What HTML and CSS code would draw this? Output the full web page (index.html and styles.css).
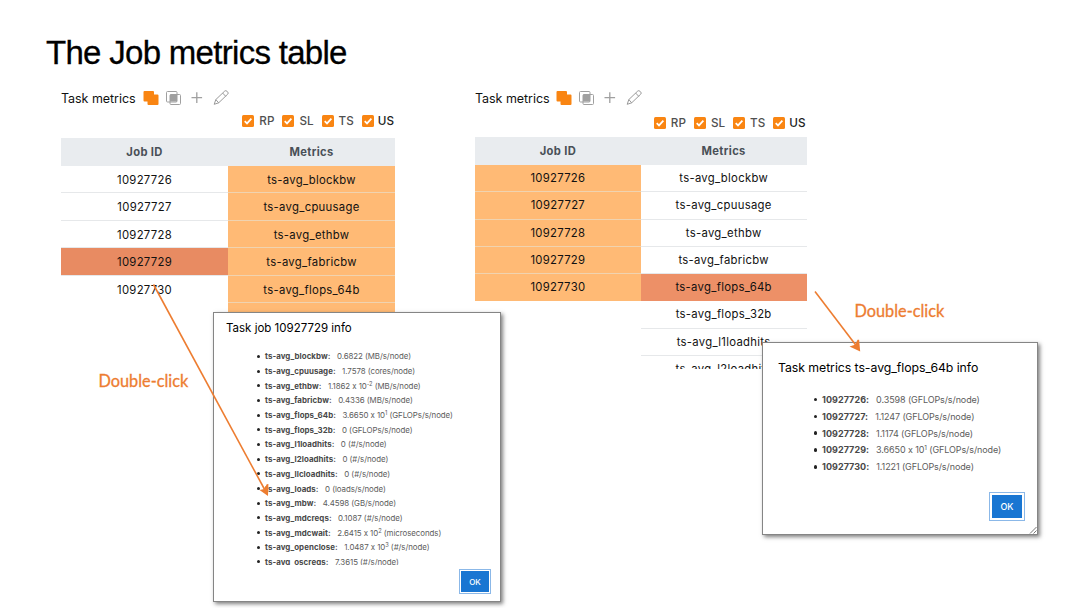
FILE: index.html
```html
<!DOCTYPE html>
<html lang="en">
<head>
<meta charset="utf-8">
<title>The Job metrics table</title>
<link rel="stylesheet" href="styles.css">
</head>
<body>
<svg class="defs" width="0" height="0">
  <symbol id="tools" viewBox="0 0 90 18">
    <path fill="#f98512" d="M1.500 2h8.500q1 0 1 1v2.500h3.500q1 0 1 1v8.500q0 1-1 1h-9q-1 0-1-1v-2.500h-3q-1 0-1-1V3q0-1 1-1z"/>
    <g fill="none" stroke="#a0a0a0"><rect x="23.500" y="2.500" width="10.500" height="10.500" rx="1"/><rect x="27" y="5.500" width="10.500" height="10" rx="1"/></g>
    <rect x="27" y="5.500" width="7" height="7" fill="#a0a0a0"/>
    <path d="M53.800 3.300v10.600M48.500 8.600h10.600" stroke="#a0a0a0" stroke-width="1.300"/>
    <path d="M71.200 15.300l1.600-4.700 8.900-8.500q1.100-1 2.200.1l.8.800q1.100 1.100 0 2.200l-9 8.600zM72.800 10.600l2.900 3.200M79.700 4.100l3 3.200" fill="none" stroke="#8e8e8e" stroke-width=".9"/>
  </symbol>
  <symbol id="check" viewBox="0 0 12 12"><rect width="12" height="12" rx="1.500" fill="#f98512"/><path d="M2.700 6.100l2.300 2.300 4.400-4.800" fill="none" stroke="#fff" stroke-width="1.700"/></symbol>
</svg>
<main class="slide">
  <h1 class="title"><span>The Job metrics table</span></h1>
  <div class="panels">
    <section class="panel left">
      <div class="toolbar"><span>Task metrics</span><svg class="tools"><use href="#tools"/></svg></div>
      <div class="filters">
        <label><svg><use href="#check"/></svg>RP</label><label><svg><use href="#check"/></svg>SL</label><label><svg><use href="#check"/></svg>TS</label><label class="dark"><svg><use href="#check"/></svg>US</label>
      </div>
      <div class="head"><span>Job ID</span><span>Metrics</span></div>
      <div class="cols">
        <div class="col">
          <div class="cell">10927726</div><div class="cell">10927727</div><div class="cell">10927728</div><div class="cell hit">10927729</div><div class="cell">10927730</div>
        </div>
        <div class="col orange">
          <div class="cell">ts-avg_blockbw</div><div class="cell">ts-avg_cpuusage</div><div class="cell">ts-avg_ethbw</div><div class="cell">ts-avg_fabricbw</div><div class="cell">ts-avg_flops_64b</div><div class="cell">ts-avg_flops_32b</div>
        </div>
      </div>
    </section>
    <section class="panel right">
      <div class="toolbar"><span>Task metrics</span><svg class="tools"><use href="#tools"/></svg></div>
      <div class="filters">
        <label><svg><use href="#check"/></svg>RP</label><label><svg><use href="#check"/></svg>SL</label><label><svg><use href="#check"/></svg>TS</label><label class="dark"><svg><use href="#check"/></svg>US</label>
      </div>
      <div class="head"><span>Job ID</span><span>Metrics</span></div>
      <div class="cols">
        <div class="col orange">
          <div class="cell">10927726</div><div class="cell">10927727</div><div class="cell">10927728</div><div class="cell">10927729</div><div class="cell">10927730</div>
        </div>
        <div class="col">
          <div class="cell">ts-avg_blockbw</div><div class="cell">ts-avg_cpuusage</div><div class="cell">ts-avg_ethbw</div><div class="cell">ts-avg_fabricbw</div><div class="cell hit">ts-avg_flops_64b</div><div class="cell">ts-avg_flops_32b</div><div class="cell">ts-avg_l1loadhits</div><div class="cell">ts-avg_l2loadhits</div>
        </div>
      </div>
    </section>
  </div>

  <div class="dialog job">
    <h2><span>Task job 10927729 info</span></h2>
    <ul>
      <li><b>ts-avg_blockbw:</b><span>0.6822 (MB/s/node)</span></li>
      <li><b>ts-avg_cpuusage:</b><span>1.7578 (cores/node)</span></li>
      <li><b>ts-avg_ethbw:</b><span>1.1862 x 10<sup>-2</sup> (MB/s/node)</span></li>
      <li><b>ts-avg_fabricbw:</b><span>0.4336 (MB/s/node)</span></li>
      <li><b>ts-avg_flops_64b:</b><span>3.6650 x 10<sup>1</sup> (GFLOPs/s/node)</span></li>
      <li><b>ts-avg_flops_32b:</b><span>0 (GFLOPs/s/node)</span></li>
      <li><b>ts-avg_l1loadhits:</b><span>0 (#/s/node)</span></li>
      <li><b>ts-avg_l2loadhits:</b><span>0 (#/s/node)</span></li>
      <li><b>ts-avg_llcloadhits:</b><span>0 (#/s/node)</span></li>
      <li><b>ts-avg_loads:</b><span>0 (loads/s/node)</span></li>
      <li><b>ts-avg_mbw:</b><span>4.4598 (GB/s/node)</span></li>
      <li><b>ts-avg_mdcreqs:</b><span>0.1087 (#/s/node)</span></li>
      <li><b>ts-avg_mdcwait:</b><span>2.6415 x 10<sup>2</sup> (microseconds)</span></li>
      <li><b>ts-avg_openclose:</b><span>1.0487 x 10<sup>3</sup> (#/s/node)</span></li>
      <li><b>ts-avg_oscreqs:</b><span>7.3615 (#/s/node)</span></li>
    </ul>
    <button class="ok">OK</button>
  </div>

  <div class="dialog metric">
    <h2><span>Task metrics ts-avg_flops_64b info</span></h2>
    <ul>
      <li><b>10927726:</b><span>0.3598 (GFLOPs/s/node)</span></li>
      <li><b>10927727:</b><span>1.1247 (GFLOPs/s/node)</span></li>
      <li><b>10927728:</b><span>1.1174 (GFLOPs/s/node)</span></li>
      <li><b>10927729:</b><span>3.6650 x 10<sup>1</sup> (GFLOPs/s/node)</span></li>
      <li><b>10927730:</b><span>1.1221 (GFLOPs/s/node)</span></li>
    </ul>
    <button class="ok">OK</button>
    <svg class="grip" viewBox="0 0 8 8"><path d="M1 7.500L7.500 1M4.500 7.500l3-3" stroke="#666" stroke-width=".9"/></svg>
  </div>

  <svg class="arrows" viewBox="0 0 1080 608" fill="none" stroke="#ed7d31" stroke-width="1.600">
    <path d="M153.500 284.500L266 492"/><path fill="#ed7d31" stroke="none" d="M268 496l-8.500-6 4.800-1 2.400-4.800 1.700-.2z"/>
    <path d="M815 291.500L858 348"/><path fill="#ed7d31" stroke="none" d="M860.200 351.500l-10.700-5 5.500-1.700 2.600-5 1.500-.1z"/>
  </svg>
  <div class="note one">Double-click</div>
  <div class="note two">Double-click</div>
</main>
</body>
</html>
```
FILE: styles.css
```css
* { box-sizing: border-box; }
body { margin: 0; background: #fff; font-family: Inter, "Liberation Sans", sans-serif; font-feature-settings: "calt" 0; color: #111; }
.defs { position: absolute; }
.slide { position: relative; width: 1080px; height: 608px; overflow: hidden; }
.title { margin: 0; padding: 34px 0 0 46px; height: 86px; font: 400 33px/38px "Liberation Sans", sans-serif; letter-spacing: -.7px; color: #000; -webkit-text-stroke: .3px #000; white-space: nowrap; }
.panels { display: flex; padding-left: 61px; gap: 80px; }
.panel { width: 334px; }
.toolbar { display: flex; align-items: center; height: 24px; font-size: 12.500px; }
.toolbar span { width: 75px; letter-spacing: -.05px; white-space: nowrap; }
.tools { width: 90px; height: 18px; margin-left: 7px; }
.right .toolbar span { width: 74px; }
.filters { display: flex; justify-content: flex-end; height: 28px; padding: 3px 1px 0 0; gap: 8px; font-size: 11.700px; font-weight: 500; color: #505050; }
.filters label { display: flex; align-items: center; height: 16px; gap: 5px; }
.filters .dark { color: #222; gap: 4px; }
.filters svg { width: 12px; height: 12px; }
.head { display: grid; grid-template-columns: 1fr 1fr; height: 28px; background: #e9ecef; text-align: center; font-size: 11.200px; line-height: 28px; font-weight: 700; color: #495057; letter-spacing: .35px; }
.cols { display: grid; grid-template-columns: 1fr 1fr; align-items: start; overflow: hidden; height: 204px; }
.cell { height: 27.400px; line-height: 28px; border-bottom: 1px solid #e6e8ea; text-align: center; font-size: 11.300px; letter-spacing: .3px; }
.orange .cell { background: #ffba75; border-color: #f0d3b0; }
.cell.hit { background: #e88b62; }
.left .col:first-child .cell:last-child { border-color: transparent; }
.right { width: 331.500px; }
.right .filters { height: 27px; padding-top: 5px; }
.right .cell { height: 27.250px; line-height: 27.600px; }
.right .cell.hit { background: #ed9067; border-color: #ed9067; }
.right .orange .cell:last-child { border-color: #ffba75; }

.dialog { position: absolute; background: #fff; border: 1px solid #858585; box-shadow: 2px 2px 4px rgba(0,0,0,.5); color: #4b4b4b; white-space: nowrap; }
.dialog h2 { margin: 0; font-weight: 400; color: #000; }
.dialog ul { list-style: none; margin: 0; padding: 0; }
.dialog li { display: flex; align-items: center; }
.dialog li::before { content: ""; border-radius: 50%; background: #222; }
.dialog b { font-weight: 700; color: #484848; }
.dialog li span { color: #5c5c5c; }
.dialog sup { font-size: .72em; line-height: 0; vertical-align: .5em; }
.job { left: 213px; top: 312px; width: 288px; height: 290px; padding: 7px 9px 0 12px; }
.job h2 { font-size: 11.500px; line-height: 16px; }
.job ul { margin: 13px 0 0 31px; height: 216px; overflow: hidden; }
.job li { height: 14.700px; font-size: 7.900px; }
.job b { margin-right: 6.500px; letter-spacing: .07px; }
.job li span { letter-spacing: -.06px; }
.job li::before { width: 3px; height: 3px; margin-right: 5px; }
.ok { display: block; margin: 4px 0 0 auto; padding: 0; width: 32px; height: 25px; border: 2px solid #fff; outline: 1px solid #8bb8e8; outline-offset: -1px; background: #1976d2; background-clip: padding-box; color: #fff; font: 500 8px Inter, sans-serif; }
.metric { left: 762px; top: 342px; width: 276px; height: 193px; padding: 16px 12px 0 15px; }
.metric h2 { font-size: 12.300px; line-height: 18px; letter-spacing: -.06px; }
.metric ul { margin: 14px 0 0 35.500px; }
.metric li { height: 16.850px; font-size: 9px; }
.metric b { margin-right: 7px; letter-spacing: .05px; }
.metric li span { letter-spacing: -.1px; }
.metric li::before { width: 3.500px; height: 3.500px; margin-right: 5px; }
.metric .ok { width: 36px; height: 29px; margin-top: 17px; font-size: 9px; border-width: 3px; }
.grip { position: absolute; right: 0; bottom: 0; width: 8px; height: 8px; }
.arrows { position: absolute; left: 0; top: 0; width: 1080px; height: 608px; }
.note { position: absolute; font: 400 16.300px/20px Lato, sans-serif; color: #ed7d31; -webkit-text-stroke: .3px #ed7d31; white-space: nowrap; }
.one { left: 98.500px; top: 371px; }
.two { left: 854.500px; top: 301px; }
```
